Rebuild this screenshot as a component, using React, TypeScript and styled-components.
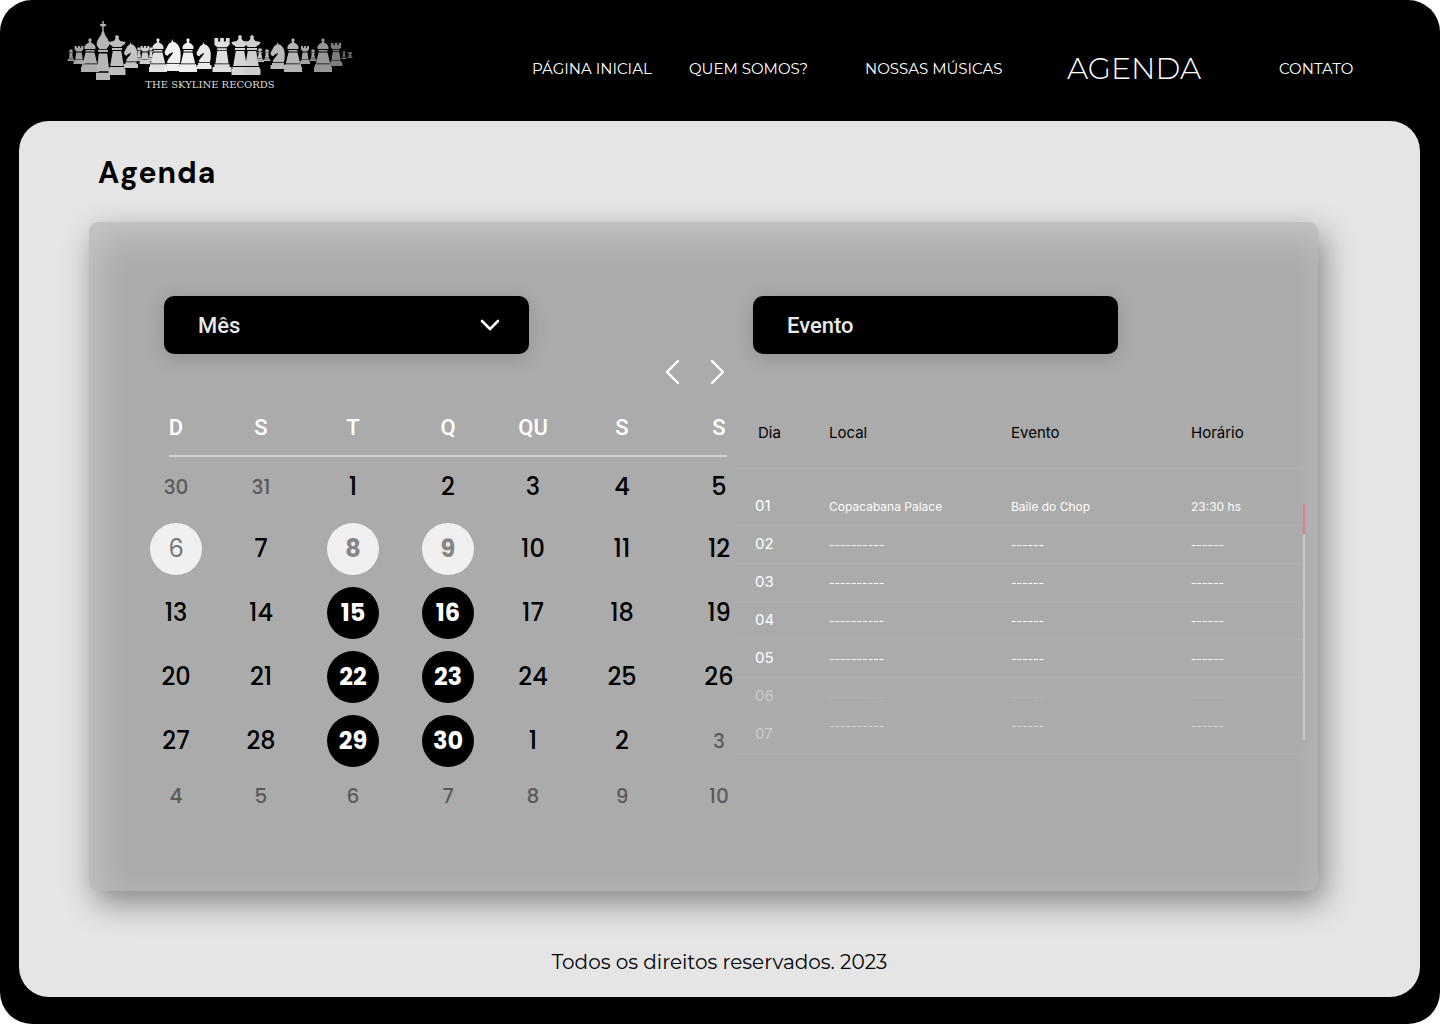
import React from "react";
import styled, { createGlobalStyle, css } from "styled-components";

const GlobalStyle = createGlobalStyle`
  *, *::before, *::after { box-sizing: border-box; }
  body { margin: 0; background: #fff; }
`;

const display = `Montserrat, Inter, "Open Sans", sans-serif`;
const body = `Inter, "Noto Sans", sans-serif`;
const control = `Roboto, "Noto Sans", sans-serif`;

const Page = styled.div`
  display: flex;
  flex-direction: column;
  min-height: 100vh;
  padding: 0 20px 27px 19px;
  border-radius: 32px;
  background: #000;
  font-family: ${body};
`;

const Header = styled.header`
  display: grid;
  grid-template-columns: 513fr 888fr;
  height: 121px;
`;

const Brand = styled.a`
  display: flex;
  flex-direction: column;
  align-items: center;
  width: 290px;
  margin: 20px 0 0 46px;
  color: #dcdcdc;
  text-decoration: none;
`;

const BrandName = styled.span`
  font: 400 10px/10px "DejaVu Serif", serif;
  white-space: nowrap;
`;

const Nav = styled.nav`
  display: grid;
  grid-template-columns: 157fr 176fr 202fr 212fr 141fr;
  align-items: center;
  height: 100%;
  padding-top: 16px;
`;

const NavLink = styled.a<{ $current?: boolean }>`
  color: #fff;
  font-family: ${display};
  font-size: ${(p) => (p.$current ? 30 : 15)}px;
  font-weight: ${(p) => (p.$current ? 300 : 400)};
  line-height: 36px;
  text-decoration: none;
  white-space: nowrap;
`;

const Main = styled.main`
  display: flex;
  flex: 1;
  flex-direction: column;
  border-radius: 30px;
  background: #e5e5e5;
`;

const Title = styled.h1`
  margin: 32px 0 29px 79px;
  color: #000;
  font: 700 30px/40px "DM Sans", ${body};
  letter-spacing: 1px;
`;

const Card = styled.section`
  display: grid;
  grid-template-columns: 602fr 576fr;
  margin: 0 102px 0 70px;
  padding: 74px 7px 72px 44px;
  border-radius: 10px;
  background: #ababab;
  box-shadow:
    6px 12px 32px rgba(0, 0, 0, 0.42),
    inset 8px 14px 36px rgba(255, 255, 255, 0.32);
`;

const Column = styled.div`
  display: flex;
  flex-direction: column;
  min-width: 0;
`;

const controlBox = css`
  width: 365px;
  height: 58px;
  border-radius: 10px;
  background: #000;
  box-shadow: 0 4px 20px rgba(0, 0, 0, 0.16);
  color: #e8e8e8;
  font: 500 22px/60px ${control};
`;

const MonthField = styled.label`
  display: grid;
  align-items: center;
  width: 365px;
  margin-left: 31px;
  > * { grid-area: 1 / 1; }
  > svg { justify-self: end; margin-right: 29px; pointer-events: none; }
`;

const MonthSelect = styled.select`
  ${controlBox}
  padding: 0 34px;
  border: 0;
  appearance: none;
`;

const EventHeading = styled.h2`
  ${controlBox}
  margin: 0 0 43px 18px;
  padding: 0 34px;
`;

const Pager = styled.div`
  display: flex;
  justify-content: flex-end;
  align-items: center;
  gap: 30px;
  height: 36px;
  margin: 0 10px 8px 0;
`;

const PagerButton = styled.button`
  display: flex;
  padding: 0;
  border: 0;
  background: none;
  color: #fff;
  cursor: pointer;
`;

const Calendar = styled.table`
  width: 100%;
  border-spacing: 0;
  table-layout: fixed;
  th, td { padding: 0; text-align: center; }
  th:last-child, td:last-child { padding-left: 32px; }
`;

const WeekHead = styled.thead`
  tr {
    height: 59px;
    background: linear-gradient(#d2d2d2, #d2d2d2) no-repeat 36px 100% / calc(100% - 44px) 2px;
  }
  th { color: #fff; font: 500 22px/26px ${control}; }
`;

const Week = styled.tr<{ $height: number }>`
  height: ${(p) => p.$height}px;
`;

type Tone = "plain" | "muted" | "today" | "light" | "dark";

const tones = {
  plain: css`color: #000; font-weight: 500;`,
  muted: css`color: #5a5a5a; font-size: 20px; line-height: 40px; font-weight: 500;`,
  today: css`color: #747474; background: #f0f0f0;`,
  light: css`color: #868686; background: #f0f0f0; font-weight: 700;`,
  dark: css`color: #fff; background: #000; font-weight: 700;`,
};

const Day = styled.span<{ $tone: Tone }>`
  display: inline-block;
  min-width: ${(p) => (p.$tone === "plain" || p.$tone === "muted" ? 0 : 52)}px;
  border-radius: 50%;
  font: 400 24px/52px Poppins, ${body};
  vertical-align: middle;
  ${(p) => tones[p.$tone]}
`;

const EventsArea = styled.div`
  position: relative;
`;

const Events = styled.table`
  width: 100%;
  border-spacing: 0;
  table-layout: fixed;
  th, td { padding: 0; text-align: left; }
  thead th {
    height: 72px;
    border-bottom: 1px solid #b0b0b0;
    color: #000;
    font: 400 15px/20px ${body};
  }
  thead th:first-child { padding-left: 23px; }
`;

const EventRow = styled.tr<{ $first: boolean; $last: boolean; $line: boolean; $day: number; $text: number }>`
  th, td {
    height: ${(p) => (p.$first ? 57 : 38)}px;
    padding-top: ${(p) => (p.$first ? 27 : 8)}px;
    border-bottom: 1px solid ${(p) => (p.$line ? "#b0b0b0" : "transparent")};
    vertical-align: baseline;
    white-space: nowrap;
  }
  th {
    padding-left: 20px;
    color: rgba(255, 255, 255, ${(p) => p.$day});
    font: 400 15px/20px ${body};
  }
  td {
    color: rgba(255, 255, 255, ${(p) => p.$text});
    font: 400 12px/20px ${body};
    ${(p) => p.$last && "padding-top: 0; vertical-align: top;"}
  }
`;

const ScrollTrack = styled.div`
  position: absolute;
  top: 107px;
  right: 6px;
  width: 2px;
  height: 236px;
  background: #c6c6c6;
`;

const ScrollThumb = styled.div`
  height: 30px;
  background: #dd7f88;
`;

const Footer = styled.footer`
  padding: 57px 0 21px;
  color: #000;
  font: 400 20px/28px ${display};
  text-align: center;
`;

/* Each piece is drawn in a 20 x 40 box and scaled to its slot in the skyline. */
const shapes = {
  pawn: (
    <>
      <circle cx="10" cy="6" r="5" />
      <path d="M4 12h12v3h-3l3 14H4l3-14H4zM3 31h14v3H3zM0 35h20v5H0z" />
    </>
  ),
  rook: (
    <path d="M2 0h4v4h2V0h4v4h2V0h4v8l-3 3H5L2 8zM5 12h10v2H5zM5 15h10l2 15H3zM2 31h16v3H2zM0 34h20v6H0z" />
  ),
  bishop: (
    <path d="M10 0l2 2-1 3c3 2 6 4 5 8H4c-1-4 2-6 5-8L8 2zM5 14h10v2H5zM5 17h10l3 13H2zM1 31h18v3H1zM0 34h20v6H0z" />
  ),
  king: (
    <path d="M9 0h2v2h3v1.500h-3V7l1 1c1 3 7 4 7 8 0 1-2 2-4 3H5c-2-1-4-2-4-3 0-4 6-5 7-8l1-1V3.500H6V2h3zM3 19.500h14v1.500H3zM4 22h12l3 12H1l3-12zM0 35h20v5H0z" />
  ),
  queen: (
    <path d="M8 1l2-1 2 1v3l2 2 6 1c0 3-4 3-5 5H5C4 10 0 10 0 7l6-1 2-2zM4 13h12v2H4zM5 16h10l3 15H2zM1 32h18v2H1zM0 34h20v6H0z" />
  ),
  knight: (
    <path d="M9 0l1 3c8 2 11 13 8 27H3c1-7 6-8 7-14-2 2-5 2-6 5l-3-1-1-4L5 6l3-2zM2 31h16v3H2zM0 34h20v6H0z" />
  ),
};

type PieceKind = keyof typeof shapes;

/* kind, centre x, top, bottom, width, grey level */
const skyline: [PieceKind, number, number, number, number, number][] = [
  ["pawn", 70, 49, 61, 7, 155],
  ["rook", 78, 46, 64, 11, 165],
  ["bishop", 89, 38, 72, 18, 175],
  ["queen", 116, 35, 75, 17, 190],
  ["king", 102, 21, 80, 14, 182],
  ["knight", 130, 42, 68, 14, 195],
  ["pawn", 138, 47, 61, 7, 200],
  ["pawn", 150, 47, 61, 7, 210],
  ["rook", 144, 46, 64, 11, 205],
  ["bishop", 157, 38, 72, 18, 225],
  ["knight", 172, 39, 71, 17, 240],
  ["bishop", 187, 38, 72, 18, 240],
  ["knight", 203, 42, 69, 15, 232],
  ["rook", 221, 38, 72, 19, 222],
  ["queen", 239, 35, 75, 17, 214],
  ["queen", 251, 35, 75, 17, 206],
  ["pawn", 259, 48, 62, 8, 195],
  ["pawn", 266, 49, 61, 7, 190],
  ["knight", 277, 42, 69, 15, 185],
  ["bishop", 292, 38, 72, 18, 182],
  ["rook", 304, 46, 64, 10, 165],
  ["pawn", 312, 49, 61, 7, 155],
  ["bishop", 322, 38, 72, 18, 150],
  ["rook", 335, 43, 66, 13, 125],
  ["pawn", 343, 51, 59, 5, 115],
  ["rook", 349, 52, 58, 5, 105],
];

function Skyline() {
  return (
    <svg width="290" height="60" viewBox="64 20 290 60" aria-hidden="true">
      {skyline.map(([kind, x, top, bottom, width, grey], i) => (
        <g
          key={i}
          fill={`rgb(${grey},${grey},${grey})`}
          transform={`translate(${x - width / 2} ${top}) scale(${width / 20} ${(bottom - top) / 40})`}
        >
          {shapes[kind]}
        </g>
      ))}
    </svg>
  );
}

const links = ["PÁGINA INICIAL", "QUEM SOMOS?", "NOSSAS MÚSICAS", "AGENDA", "CONTATO"];
const weekdays = ["D", "S", "T", "Q", "QU", "S", "S"];
const dayColumns = [86, 84, 100, 90, 80, 98, 64];
const eventColumns = [94, 182, 180, 120];

const weeks = [
  [30, 31, 1, 2, 3, 4, 5],
  [6, 7, 8, 9, 10, 11, 12],
  [13, 14, 15, 16, 17, 18, 19],
  [20, 21, 22, 23, 24, 25, 26],
  [27, 28, 29, 30, 1, 2, 3],
  [4, 5, 6, 7, 8, 9, 10],
];
const weekHeights = [60, 64, 64, 64, 64, 46];

function toneOf(week: number, col: number): Tone {
  if (week === 5 || (week === 0 && col < 2) || (week === 4 && col === 6)) return "muted";
  if (week === 1 && col === 0) return "today";
  if (col === 2 || col === 3) {
    if (week === 1) return "light";
    if (week > 1) return "dark";
  }
  return "plain";
}

const dashes = ["----------", "------", "------"];
const events = [
  { day: "01", cells: ["Copacabana Palace", "Baile do Chop", "23:30 hs"], dayAlpha: 1, textAlpha: 1 },
  { day: "02", cells: dashes, dayAlpha: 1, textAlpha: 1 },
  { day: "03", cells: dashes, dayAlpha: 1, textAlpha: 1 },
  { day: "04", cells: dashes, dayAlpha: 1, textAlpha: 1 },
  { day: "05", cells: dashes, dayAlpha: 1, textAlpha: 1 },
  { day: "06", cells: dashes, dayAlpha: 0.4, textAlpha: 0.15 },
  { day: "07", cells: dashes, dayAlpha: 0.4, textAlpha: 0.5 },
];

function Arrow({ d }: { d: string }) {
  return (
    <svg width="15" height="26" viewBox="0 0 15 26" fill="none" stroke="currentColor" strokeWidth="2.4" strokeLinecap="round" strokeLinejoin="round" aria-hidden="true">
      <path d={d} />
    </svg>
  );
}

export default function App() {
  return (
    <>
      <GlobalStyle />
      <Page>
        <Header>
          <Brand href="#">
            <Skyline />
            <BrandName>THE SKYLINE RECORDS</BrandName>
          </Brand>
          <Nav>
            {links.map((label) => (
              <NavLink key={label} href="#" $current={label === "AGENDA"}>
                {label}
              </NavLink>
            ))}
          </Nav>
        </Header>
        <Main>
          <Title>Agenda</Title>
          <Card>
            <Column>
              <MonthField>
                <MonthSelect aria-label="Mês">
                  <option>Mês</option>
                </MonthSelect>
                <svg width="20" height="12" viewBox="0 0 20 12" fill="none" stroke="#fff" strokeWidth="2.6" strokeLinecap="round" strokeLinejoin="round" aria-hidden="true">
                  <path d="M2 2l8 8 8-8" />
                </svg>
              </MonthField>
              <Pager>
                <PagerButton type="button" aria-label="Anterior">
                  <Arrow d="M13 2L2 13l11 11" />
                </PagerButton>
                <PagerButton type="button" aria-label="Próximo">
                  <Arrow d="M2 2l11 11L2 24" />
                </PagerButton>
              </Pager>
              <Calendar>
                <colgroup>
                  {dayColumns.map((width, i) => (
                    <col key={i} width={width} />
                  ))}
                </colgroup>
                <WeekHead>
                  <tr>
                    {weekdays.map((name, i) => (
                      <th key={i} scope="col">{name}</th>
                    ))}
                  </tr>
                </WeekHead>
                <tbody>
                  {weeks.map((days, w) => (
                    <Week key={w} $height={weekHeights[w]}>
                      {days.map((day, c) => (
                        <td key={c}>
                          <Day $tone={toneOf(w, c)}>{day}</Day>
                        </td>
                      ))}
                    </Week>
                  ))}
                </tbody>
              </Calendar>
            </Column>
            <Column>
              <EventHeading>Evento</EventHeading>
              <EventsArea>
                <Events>
                  <colgroup>
                    {eventColumns.map((width, i) => (
                      <col key={i} width={width} />
                    ))}
                  </colgroup>
                  <thead>
                    <tr>
                      <th scope="col">Dia</th>
                      <th scope="col">Local</th>
                      <th scope="col">Evento</th>
                      <th scope="col">Horário</th>
                    </tr>
                  </thead>
                  <tbody>
                    {events.map((event, i) => (
                      <EventRow
                        key={event.day}
                        $first={i === 0}
                        $last={i === events.length - 1}
                        $line={i !== 5}
                        $day={event.dayAlpha}
                        $text={event.textAlpha}
                      >
                        <th scope="row">{event.day}</th>
                        {event.cells.map((cell, c) => (
                          <td key={c}>{cell}</td>
                        ))}
                      </EventRow>
                    ))}
                  </tbody>
                </Events>
                <ScrollTrack>
                  <ScrollThumb />
                </ScrollTrack>
              </EventsArea>
            </Column>
          </Card>
          <Footer>Todos os direitos reservados. 2023</Footer>
        </Main>
      </Page>
    </>
  );
}
